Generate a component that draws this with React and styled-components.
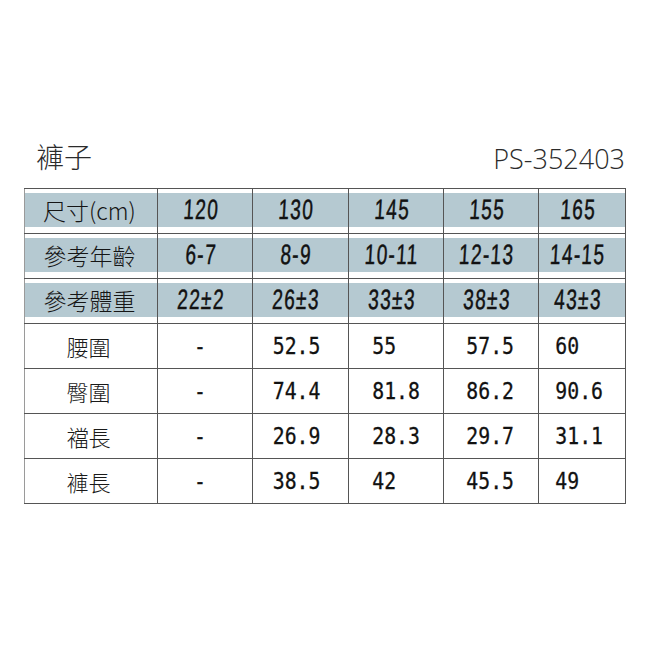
import styled, { createGlobalStyle } from "styled-components";

const GlobalStyle = createGlobalStyle`
  html, body {
    margin: 0;
    padding: 0;
    background: #ffffff;
  }
  body {
    font-family: "Noto Sans CJK TC", "Liberation Sans", sans-serif;
  }
`;

const headerRows = [
  { label: "尺寸(cm)", values: ["120", "130", "145", "155", "165"] },
  { label: "參考年齡", values: ["6-7", "8-9", "10-11", "12-13", "14-15"] },
  { label: "參考體重", values: ["22±2", "26±3", "33±3", "38±3", "43±3"] },
];

const bodyRows = [
  { label: "腰圍", values: ["-", "52.5", "55", "57.5", "60"] },
  { label: "臀圍", values: ["-", "74.4", "81.8", "86.2", "90.6"] },
  { label: "襠長", values: ["-", "26.9", "28.3", "29.7", "31.1"] },
  { label: "褲長", values: ["-", "38.5", "42", "45.5", "49"] },
];

const colWidths = [133, 95, 96, 95, 95, 87];
const numPads = [0, 23, 27, 26, 19];

const Page = styled.div`
  width: 650px;
  height: 650px;
  box-sizing: border-box;
  padding: 138px 0 0 24px;
`;

const TitleBar = styled.div`
  width: 601px;
  display: flex;
  align-items: center;
  justify-content: space-between;
  padding: 0 0 0 12px;
  box-sizing: border-box;
  height: 40px;
  margin-bottom: 10px;
`;

const Title = styled.h1`
  margin: -4px 0 0;
  font-family: "Noto Sans CJK TC", sans-serif;
  font-weight: 300;
  font-size: 28px;
  line-height: 36px;
  color: #2b2b2b;
`;

const Code = styled.div`
  font-family: "Open Sans", "Liberation Sans", sans-serif;
  font-weight: 300;
  font-size: 27px;
  line-height: 32px;
  color: #2b2b2b;
  margin-top: 2px;
`;

const Table = styled.table`
  border-collapse: collapse;
  table-layout: fixed;
  width: 601px;
`;

const Cell = styled.td`
  padding: 0;
  border: 1px solid #555;
  border-left-color: ${(p) => (p.$first ? "#9a9a9a" : "#555")};
  height: 45px;
  box-sizing: border-box;
  vertical-align: middle;
`;

const Band = styled.div`
  margin: 4px 0 6px;
  height: 34px;
  background: #b5c9d1;
  display: flex;
  align-items: center;
  justify-content: center;
  overflow: hidden;
`;

const HeadLabel = styled.span`
  font-family: "Noto Sans CJK TC", sans-serif;
  font-weight: 300;
  font-size: 23px;
  color: #151515;
  margin-right: 3px;
  white-space: nowrap;
`;

const HeadNum = styled.span`
  display: inline-block;
  flex-shrink: 0;
  white-space: nowrap;
  font-family: "Liberation Sans", sans-serif;
  font-size: 28px;
  line-height: 30px;
  color: #111;
  -webkit-text-stroke: 0.5px #111;
  transform: scaleX(0.68) skewX(-5deg);
  margin-right: 8px;
  letter-spacing: 2px;
`;

const BodyLabel = styled.div`
  font-family: "Noto Sans CJK TC", sans-serif;
  font-weight: 300;
  font-size: 22px;
  color: #1a1a1a;
  text-align: center;
  margin-right: 5px;
`;

const BodyNum = styled.div`
  font-family: "DejaVu Sans Mono", monospace;
  font-size: 23px;
  color: #111;
  white-space: nowrap;
  -webkit-text-stroke: 0.3px #111;
  padding-left: ${(p) => (p.$center ? "0" : p.$pad + "px")};
  text-align: ${(p) => (p.$center ? "center" : "left")};
  transform: scaleX(0.86);
  transform-origin: ${(p) => (p.$center ? "center" : "left")} center;
  margin-left: ${(p) => (p.$center ? "-10px" : "0")};
`;

export default function App() {
  return (
    <>
      <GlobalStyle />
      <Page>
        <TitleBar>
          <Title>褲子</Title>
          <Code>PS-352403</Code>
        </TitleBar>
        <Table>
          <colgroup>
            {colWidths.map((w, i) => (
              <col key={i} style={{ width: w }} />
            ))}
          </colgroup>
          <tbody>
            {headerRows.map((row) => (
              <tr key={row.label}>
                <Cell $first>
                  <Band>
                    <HeadLabel>{row.label}</HeadLabel>
                  </Band>
                </Cell>
                {row.values.map((v, i) => (
                  <Cell key={i}>
                    <Band>
                      <HeadNum>{v}</HeadNum>
                    </Band>
                  </Cell>
                ))}
              </tr>
            ))}
            {bodyRows.map((row) => (
              <tr key={row.label}>
                <Cell $first>
                  <BodyLabel>{row.label}</BodyLabel>
                </Cell>
                {row.values.map((v, i) => (
                  <Cell key={i}>
                    <BodyNum $center={i === 0} $pad={numPads[i]}>
                      {v}
                    </BodyNum>
                  </Cell>
                ))}
              </tr>
            ))}
          </tbody>
        </Table>
      </Page>
    </>
  );
}
